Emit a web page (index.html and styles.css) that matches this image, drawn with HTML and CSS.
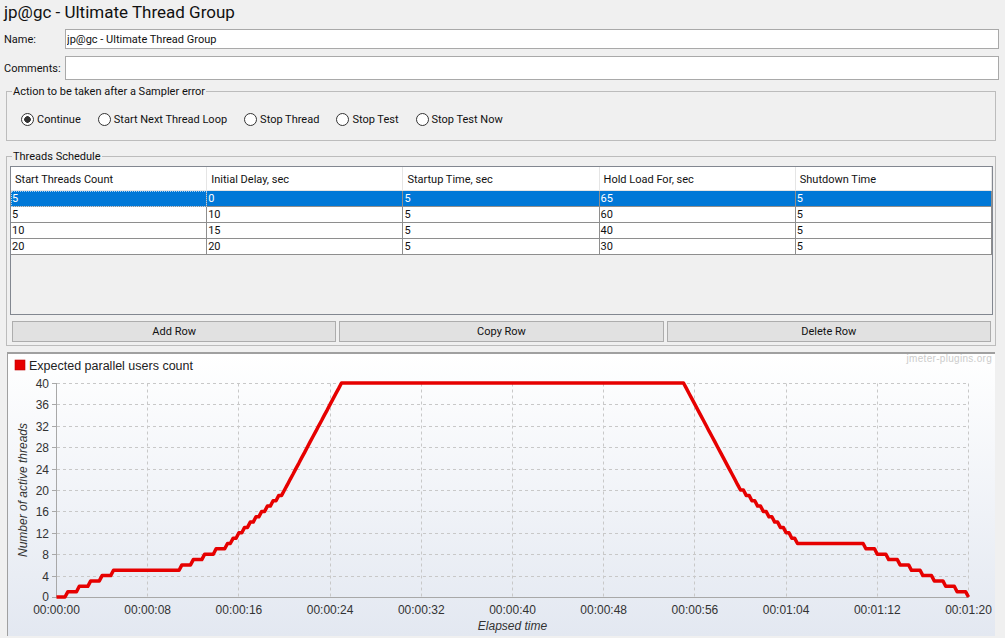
FILE: index.html
```html
<!DOCTYPE html>
<html lang="en">
<head>
    <meta charset="UTF-8">
    <meta name="viewport" content="width=device-width, initial-scale=1.0">
    <title>jp@gc - Ultimate Thread Group</title>
    <link rel="stylesheet" href="styles.css">
</head>
<body>
    <div class="title">jp@gc - Ultimate Thread Group</div>

    <div class="field-row">
        <label class="field-label" for="name">Name:</label>
        <input class="field-input" id="name" type="text" value="jp@gc - Ultimate Thread Group">
    </div>
    <div class="field-row comments">
        <label class="field-label" for="comments">Comments:</label>
        <input class="field-input" id="comments" type="text">
    </div>

    <fieldset class="group action">
        <legend>Action to be taken after a Sampler error</legend>
        <div class="radios">
            <label class="radio"><span class="circle checked"></span>Continue</label>
            <label class="radio"><span class="circle"></span>Start Next Thread Loop</label>
            <label class="radio"><span class="circle"></span>Stop Thread</label>
            <label class="radio"><span class="circle"></span>Stop Test</label>
            <label class="radio"><span class="circle"></span>Stop Test Now</label>
        </div>
    </fieldset>

    <fieldset class="group schedule">
        <legend>Threads Schedule</legend>
        <div class="table-box">
            <table class="grid" id="schedule">
                <thead>
                    <tr>
                        <th>Start Threads Count</th>
                        <th>Initial Delay, sec</th>
                        <th>Startup Time, sec</th>
                        <th>Hold Load For, sec</th>
                        <th>Shutdown Time</th>
                    </tr>
                </thead>
                <tbody>
                    <tr class="selected">
                        <td class="focus">5</td><td>0</td><td>5</td><td>65</td><td>5</td>
                    </tr>
                    <tr>
                        <td>5</td><td>10</td><td>5</td><td>60</td><td>5</td>
                    </tr>
                    <tr>
                        <td>10</td><td>15</td><td>5</td><td>40</td><td>5</td>
                    </tr>
                    <tr>
                        <td>20</td><td>20</td><td>5</td><td>30</td><td>5</td>
                    </tr>
                </tbody>
            </table>
        </div>
        <div class="buttons">
            <button class="btn">Add Row</button>
            <button class="btn">Copy Row</button>
            <button class="btn">Delete Row</button>
        </div>
    </fieldset>

    <div class="chart">
        <svg width="987" height="283" viewBox="0 0 987 283">
            <rect x="7" y="7" width="10" height="10" class="legend-box"/>
            <text x="21" y="17" class="legend-text">Expected parallel users count</text>
            <text x="984" y="9" class="watermark" text-anchor="end">jmeter-plugins.org</text>

            <g class="grid-lines">
                <line x1="139.5" y1="30.5" x2="139.5" y2="244"/>
                <line x1="230.5" y1="30.5" x2="230.5" y2="244"/>
                <line x1="322.5" y1="30.5" x2="322.5" y2="244"/>
                <line x1="413.5" y1="30.5" x2="413.5" y2="244"/>
                <line x1="504.5" y1="30.5" x2="504.5" y2="244"/>
                <line x1="595.5" y1="30.5" x2="595.5" y2="244"/>
                <line x1="686.5" y1="30.5" x2="686.5" y2="244"/>
                <line x1="778.5" y1="30.5" x2="778.5" y2="244"/>
                <line x1="869.5" y1="30.5" x2="869.5" y2="244"/>
                <line x1="960.5" y1="30.5" x2="960.5" y2="244"/>
                <line x1="49" y1="223.5" x2="960.5" y2="223.5"/>
                <line x1="49" y1="201.5" x2="960.5" y2="201.5"/>
                <line x1="49" y1="180.5" x2="960.5" y2="180.5"/>
                <line x1="49" y1="158.5" x2="960.5" y2="158.5"/>
                <line x1="49" y1="137.5" x2="960.5" y2="137.5"/>
                <line x1="49" y1="116.5" x2="960.5" y2="116.5"/>
                <line x1="49" y1="94.5" x2="960.5" y2="94.5"/>
                <line x1="49" y1="73.5" x2="960.5" y2="73.5"/>
                <line x1="49" y1="51.5" x2="960.5" y2="51.5"/>
                <line x1="49" y1="30.5" x2="960.5" y2="30.5"/>
            </g>

            <g class="axis-lines">
                <line x1="48.5" y1="30" x2="48.5" y2="245"/>
                <line x1="48" y1="244.5" x2="961" y2="244.5"/>
                <path d="M44 244.5h4M44 223.5h4M44 201.5h4M44 180.5h4M44 158.5h4M44 137.5h4M44 116.5h4M44 94.5h4M44 73.5h4M44 51.5h4M44 30.5h4"/>
            </g>

            <g class="axis-text" text-anchor="end">
                <text x="41" y="247.5">0</text>
                <text x="41" y="228">4</text>
                <text x="41" y="206">8</text>
                <text x="41" y="185">12</text>
                <text x="41" y="163">16</text>
                <text x="41" y="142">20</text>
                <text x="41" y="121">24</text>
                <text x="41" y="99">28</text>
                <text x="41" y="78">32</text>
                <text x="41" y="56">36</text>
                <text x="41" y="35">40</text>
            </g>

            <g class="axis-text" text-anchor="middle">
                <text x="48.5" y="261">00:00:00</text>
                <text x="139.7" y="261">00:00:08</text>
                <text x="230.9" y="261">00:00:16</text>
                <text x="322.1" y="261">00:00:24</text>
                <text x="413.3" y="261">00:00:32</text>
                <text x="504.5" y="261">00:00:40</text>
                <text x="595.7" y="261">00:00:48</text>
                <text x="686.9" y="261">00:00:56</text>
                <text x="778.1" y="261">00:01:04</text>
                <text x="869.3" y="261">00:01:12</text>
                <text x="960.5" y="261">00:01:20</text>
            </g>

            <text x="504.5" y="277" class="axis-title" text-anchor="middle">Elapsed time</text>
            <text class="axis-title" text-anchor="middle" transform="translate(19,137) rotate(-90)">Number of active threads</text>

            <polyline id="users-line" class="users-line" points=""/>
        </svg>
    </div>

    <script>
        // expected users curve, built from the rows of the schedule table
        let schedule = [];
        document.querySelectorAll('#schedule tbody tr').forEach(row => {
            let values = [];
            row.querySelectorAll('td').forEach(cell => values.push(parseFloat(cell.textContent)));
            schedule.push(values);
        });

        function activeThreads(t) {
            let count = 0;
            schedule.forEach(([threads, delay, startup, hold, shutdown]) => {
                for (let i = 1; i <= threads; i++) {
                    let start = delay + startup * i / threads;
                    let stop = delay + startup + hold + shutdown * i / threads;
                    if (t >= start - 0.000001 && t < stop - 0.000001) {
                        count++;
                    }
                }
            });
            return count;
        }

        let x0 = 48.5, pxPerSec = 11.4;
        let y0 = 244, pxPerThread = 5.35;
        let points = [];
        for (let k = 0; k <= 320; k++) {
            let t = k / 4;
            let x = x0 + t * pxPerSec;
            let y = y0 - activeThreads(t) * pxPerThread;
            points.push(x.toFixed(1) + ',' + y.toFixed(1));
        }
        document.getElementById('users-line').setAttribute('points', points.join(' '));
    </script>
</body>
</html>
```

FILE: styles.css
```css
body {
    margin: 0;
    background-color: #f0f0f0;
    font-family: Roboto, "Noto Sans", sans-serif;
    font-size: 11px;
    color: #111;
}

.title {
    height: 25px;
    line-height: 25px;
    padding-left: 4px;
    font-size: 17px;
}

.field-row {
    display: flex;
    align-items: center;
    margin: 4px 6px 0 0;
}

.field-row.comments {
    margin-top: 7px;
}

.field-label {
    width: 61px;
    padding-left: 4px;
    flex-shrink: 0;
}

.field-input {
    flex: 1;
    height: 20px;
    box-sizing: border-box;
    margin: 0;
    padding: 0 1px;
    border: 1px solid #a9a9a9;
    background-color: #fff;
    font-family: inherit;
    font-size: 11px;
    color: #111;
    outline: none;
}

.comments .field-input {
    height: 24px;
}

.group {
    margin: 5px 9px 0 6px;
    padding: 0 4px 13px 5px;
    border: 1px solid #bcbcbc;
}

.group legend {
    padding: 0 1px;
    line-height: 13px;
}

.radios {
    display: flex;
    gap: 17px;
    margin: 13px 0 0 9px;
    height: 16px;
    align-items: center;
}

.radio {
    display: flex;
    align-items: center;
}

.circle {
    width: 13px;
    height: 13px;
    box-sizing: border-box;
    margin-right: 3px;
    border: 1px solid #333;
    border-radius: 50%;
    background-color: #fff;
}

.circle.checked {
    background: radial-gradient(circle, #333 3px, #fff 3.6px);
}

.schedule {
    margin-top: 9px;
    padding: 0 2px 3px 3px;
}

.schedule legend {
    margin-left: 2px;
}

.table-box {
    height: 149px;
    box-sizing: border-box;
    margin-top: 3px;
    border: 1px solid #828790;
    background-color: #f0f0f0;
}

.grid {
    width: 100%;
    table-layout: fixed;
    border-collapse: separate;
    border-spacing: 0;
}

.grid th {
    height: 22px;
    padding: 1px 0 0 4px;
    background-color: #fff;
    border-right: 1px solid #e5e5e5;
    border-bottom: 1px solid #e5e5e5;
    font-weight: normal;
    text-align: left;
}

.grid td {
    height: 15px;
    line-height: 15px;
    padding: 0 0 0 1px;
    background-color: #fff;
    border-right: 1px solid #8e8e8e;
    border-bottom: 1px solid #8e8e8e;
    white-space: nowrap;
}

.grid tr.selected td {
    background-color: #0078d7;
    color: #fff;
}

.grid td.focus {
    outline: 1px dotted #a9d1f2;
    outline-offset: -1px;
}

.buttons {
    display: flex;
    gap: 3px;
    margin: 6px 2px 0;
}

.btn {
    flex: 1;
    height: 21px;
    margin: 0;
    padding: 0;
    border: 1px solid #adadad;
    background-color: #e1e1e1;
    font-family: inherit;
    font-size: 11px;
    color: #111;
}

.chart {
    height: 284px;
    box-sizing: border-box;
    margin: 6px 10px 0 7px;
    border-top: 2px solid #a0a0a0;
    border-left: 1px solid #a0a0a0;
    background: linear-gradient(#fff, #e3e8f1);
}

.chart svg {
    display: block;
    margin-top: -1px;
}

.legend-box {
    fill: #e60000;
    stroke: #c00000;
    stroke-width: 0.6;
}

.legend-text {
    font-family: "Liberation Sans", Arial, sans-serif;
    font-size: 12.5px;
    fill: #222;
}

.watermark {
    font-family: "Liberation Sans", Arial, sans-serif;
    font-size: 10px;
    letter-spacing: 0.3px;
    fill: #cccccc;
}

.grid-lines line {
    stroke: #c8c8c8;
    stroke-width: 1;
    stroke-dasharray: 3 3;
}

.axis-lines line,
.axis-lines path {
    stroke: #a8a8a8;
    stroke-width: 1;
    fill: none;
}

.axis-text {
    font-family: "Liberation Sans", Arial, sans-serif;
    font-size: 12px;
    fill: #333;
}

.axis-title {
    font-family: "Liberation Sans", Arial, sans-serif;
    font-size: 12px;
    font-style: italic;
    fill: #333;
}

.users-line {
    fill: none;
    stroke: #e60000;
    stroke-width: 3.5;
    stroke-linejoin: round;
}
```
